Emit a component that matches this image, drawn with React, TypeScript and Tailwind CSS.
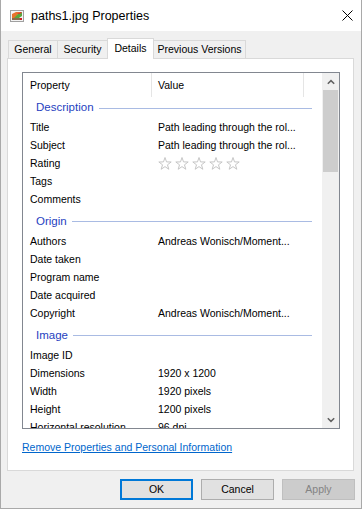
import React from "react";

const STAR = "7,0.5 8.53,4.9 13.18,4.99 9.47,7.8 10.82,12.26 7,9.6 3.18,12.26 4.53,7.8 0.82,4.99 5.47,4.9";

function Stars() {
  return (
    <svg width="84" height="14" viewBox="0 0 84 14">
      {[0, 17, 34, 51, 68].map((x) => (
        <polygon key={x} points={STAR} transform={`translate(${x},0)`} fill="#ffffff" stroke="#c6c6c6" strokeWidth="1" />
      ))}
    </svg>
  );
}

function FileIcon() {
  return (
    <svg width="14" height="12" viewBox="0 0 14 12">
      <rect x="0.5" y="0.5" width="13" height="11" fill="#f4f4f4" stroke="#a0a0a0" />
      <polygon points="2,8 2,4 6,2 10,2 5,8" fill="#e8742c" />
      <polygon points="4,8 9,3 12,2 12,6 9,8" fill="#5aa63c" />
      <polygon points="7,4 10,2 12,2 10,4" fill="#e03c2c" />
      <rect x="2" y="8" width="10" height="2" fill="#8a6a4a" />
      <rect x="10" y="8" width="2" height="2" fill="#d02020" />
    </svg>
  );
}

type Row = { k: string; v?: string; stars?: boolean };

function GroupHeader({ label, first }: { label: string; first?: boolean }) {
  return (
    <div className={`${first ? "h-[21px] pt-[1px]" : "h-[24px] pt-[3px]"} flex items-center pl-[13px] pr-[10px] shrink-0`}>
      <span className="text-[#1f3fbf] text-[11.5px] leading-none">{label}</span>
      <div className="flex-1 h-px bg-[#a9bbe3] ml-[5px]" />
    </div>
  );
}

function DataRow({ r }: { r: Row }) {
  return (
    <div className="h-[18px] pt-[1px] flex items-center shrink-0 whitespace-nowrap">
      <span className="w-[135px] pl-[7px] shrink-0">{r.k}</span>
      {r.stars ? <Stars /> : <span>{r.v ?? ""}</span>}
    </div>
  );
}

const desc: Row[] = [
  { k: "Title", v: "Path leading through the rol..." },
  { k: "Subject", v: "Path leading through the rol..." },
  { k: "Rating", stars: true },
  { k: "Tags" },
  { k: "Comments" },
];
const origin: Row[] = [
  { k: "Authors", v: "Andreas Wonisch/Moment..." },
  { k: "Date taken" },
  { k: "Program name" },
  { k: "Date acquired" },
  { k: "Copyright", v: "Andreas Wonisch/Moment..." },
];
const image: Row[] = [
  { k: "Image ID" },
  { k: "Dimensions", v: "1920 x 1200" },
  { k: "Width", v: "1920 pixels" },
  { k: "Height", v: "1200 pixels" },
  { k: "Horizontal resolution", v: "96 dpi" },
];

export default function App() {
  return (
    <div className="w-[363px] h-[509px] bg-white font-['Liberation_Sans',Arial,sans-serif] text-[10.5px] text-black">
      <div className="w-[362px] h-[509px] flex flex-col border-l border-r border-b border-[#a9a9a9] bg-[#f0f0f0]">
        {/* Title bar */}
        <div className="h-[31px] bg-white flex items-center shrink-0">
          <div className="ml-[9px] w-[14px] h-[12px] flex">
            <FileIcon />
          </div>
          <span className="ml-[7px] text-[12.5px] leading-none pt-[1px]">paths1.jpg Properties</span>
          <div className="ml-auto mr-[8px] flex">
            <svg width="11" height="11" viewBox="0 0 11 11">
              <path d="M0.5 0.5 L10.5 10.5 M10.5 0.5 L0.5 10.5" stroke="#000" strokeWidth="1" />
            </svg>
          </div>
        </div>

        {/* Body */}
        <div className="flex-1 flex flex-col pl-[6px] pt-[7px]">
          {/* Tabs */}
          <div className="flex items-end h-[20px] ml-[1px] relative z-10">
            <div className="w-[50px] h-[18px] pt-[1px] border border-b-0 border-[#d9d9d9] flex items-center justify-center">General</div>
            <div className="w-[50px] h-[18px] pt-[1px] border border-l-0 border-b-0 border-[#d9d9d9] flex items-center justify-center">Security</div>
            <div className="w-[47px] h-[21px] -mb-px -ml-px bg-white border border-b-0 border-[#d9d9d9] flex items-center justify-center">Details</div>
            <div className="w-[92px] h-[18px] pt-[1px] border border-l-0 border-b-0 border-[#d9d9d9] flex items-center justify-center">Previous Versions</div>
          </div>

          {/* Panel */}
          <div className="w-[347px] h-[413px] bg-white border border-[#d9d9d9] pl-[14px] pt-[13px] flex flex-col shrink-0">
            <div className="w-[318px] h-[357px] border border-[#828790] flex shrink-0">
              <div className="flex-1 flex flex-col overflow-hidden">
                <div className="h-[24px] flex shrink-0">
                  <div className="w-[129px] flex items-center pl-[7px] pt-[1px] border-r border-[#e5e5e5]">Property</div>
                  <div className="w-[152px] flex items-center pl-[6px] pt-[1px] border-r border-[#e5e5e5]">Value</div>
                </div>
                <GroupHeader label="Description" first />
                {desc.map((r) => (
                  <DataRow key={r.k} r={r} />
                ))}
                <GroupHeader label="Origin" />
                {origin.map((r) => (
                  <DataRow key={r.k} r={r} />
                ))}
                <GroupHeader label="Image" />
                {image.map((r) => (
                  <DataRow key={r.k} r={r} />
                ))}
              </div>
              <div className="w-[17px] bg-[#f0f0f0] flex flex-col shrink-0">
                <div className="h-[17px] flex items-center justify-center">
                  <svg width="8" height="6" viewBox="0 0 8 6">
                    <path d="M0.8 4.8 L4 1.6 L7.2 4.8" fill="none" stroke="#606060" strokeWidth="1.5" />
                  </svg>
                </div>
                <div className="h-[82px] mx-[1px] bg-[#cdcdcd]" />
                <div className="flex-1" />
                <div className="h-[17px] flex items-center justify-center">
                  <svg width="8" height="6" viewBox="0 0 8 6">
                    <path d="M0.8 1.2 L4 4.4 L7.2 1.2" fill="none" stroke="#606060" strokeWidth="1.5" />
                  </svg>
                </div>
              </div>
            </div>
            <div className="mt-[12px] leading-[13px]">
              <span className="text-[#0066cc] underline">Remove Properties and Personal Information</span>
            </div>
          </div>

          {/* Buttons */}
          <div className="mt-[8px] h-[21px] flex justify-end gap-[8px] pr-[6px] shrink-0">
            <div className="w-[73px] h-[21px] border-2 border-[#0078d7] bg-[#e1e1e1] flex items-center justify-center">OK</div>
            <div className="w-[73px] h-[21px] border border-[#adadad] bg-[#e1e1e1] flex items-center justify-center">Cancel</div>
            <div className="w-[73px] h-[21px] border border-[#bfbfbf] bg-[#cccccc] text-[#838383] flex items-center justify-center">Apply</div>
          </div>
        </div>
      </div>
    </div>
  );
}
